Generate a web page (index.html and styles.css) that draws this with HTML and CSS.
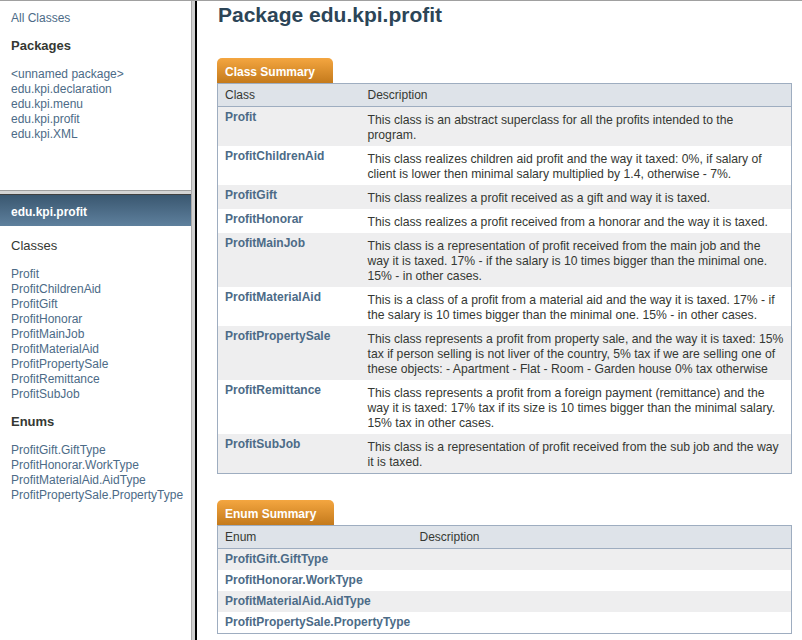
FILE: index.html
```html
<!DOCTYPE html>
<html lang="en">
<head>
  <meta charset="UTF-8" />
  <title>edu.kpi.profit</title>
  <link rel="stylesheet" href="styles.css">
</head>
<body>
  <div class="sidebar">
    <div class="packages-frame">
      <a href="#" class="all-classes">All Classes</a>
      <h2>Packages</h2>
      <ul>
        <li><a href="#">&lt;unnamed package&gt;</a></li>
        <li><a href="#">edu.kpi.declaration</a></li>
        <li><a href="#">edu.kpi.menu</a></li>
        <li><a href="#">edu.kpi.profit</a></li>
        <li><a href="#">edu.kpi.XML</a></li>
      </ul>
    </div>
    <div class="hsplit"></div>
    <div class="classes-frame">
      <h1 class="bar">edu.kpi.profit</h1>
      <h2 class="thin">Classes</h2>
      <ul>
        <li><a href="#">Profit</a></li>
        <li><a href="#">ProfitChildrenAid</a></li>
        <li><a href="#">ProfitGift</a></li>
        <li><a href="#">ProfitHonorar</a></li>
        <li><a href="#">ProfitMainJob</a></li>
        <li><a href="#">ProfitMaterialAid</a></li>
        <li><a href="#">ProfitPropertySale</a></li>
        <li><a href="#">ProfitRemittance</a></li>
        <li><a href="#">ProfitSubJob</a></li>
      </ul>
      <h2>Enums</h2>
      <ul>
        <li><a href="#">ProfitGift.GiftType</a></li>
        <li><a href="#">ProfitHonorar.WorkType</a></li>
        <li><a href="#">ProfitMaterialAid.AidType</a></li>
        <li><a href="#">ProfitPropertySale.PropertyType</a></li>
      </ul>
    </div>
  </div>
  <div class="vsplit"></div>
  <div class="content">
    <h1 class="title">Package edu.kpi.profit</h1>

    <table class="summary class-summary">
      <caption><span>Class Summary</span></caption>
      <colgroup><col class="first"><col></colgroup>
      <tr><th>Class</th><th>Description</th></tr>
      <tr class="alt">
        <td class="name"><a href="#">Profit</a></td>
        <td class="desc">This class is an abstract superclass for all the profits intended to the<br>program.</td>
      </tr>
      <tr>
        <td class="name"><a href="#">ProfitChildrenAid</a></td>
        <td class="desc">This class realizes children aid profit and the way it taxed: 0%, if salary of<br>client is lower then minimal salary multiplied by 1.4, otherwise - 7%.</td>
      </tr>
      <tr class="alt">
        <td class="name"><a href="#">ProfitGift</a></td>
        <td class="desc">This class realizes a profit received as a gift and way it is taxed.</td>
      </tr>
      <tr>
        <td class="name"><a href="#">ProfitHonorar</a></td>
        <td class="desc">This class realizes a profit received from a honorar and the way it is taxed.</td>
      </tr>
      <tr class="alt">
        <td class="name"><a href="#">ProfitMainJob</a></td>
        <td class="desc">This class is a representation of profit received from the main job and the<br>way it is taxed. 17% - if the salary is 10 times bigger than the minimal one.<br>15% - in other cases.</td>
      </tr>
      <tr>
        <td class="name"><a href="#">ProfitMaterialAid</a></td>
        <td class="desc">This is a class of a profit from a material aid and the way it is taxed. 17% - if<br>the salary is 10 times bigger than the minimal one. 15% - in other cases.</td>
      </tr>
      <tr class="alt">
        <td class="name"><a href="#">ProfitPropertySale</a></td>
        <td class="desc">This class represents a profit from property sale, and the way it is taxed: 15%<br>tax if person selling is not liver of the country, 5% tax if we are selling one of<br>these objects: - Apartment - Flat - Room - Garden house 0% tax otherwise</td>
      </tr>
      <tr>
        <td class="name"><a href="#">ProfitRemittance</a></td>
        <td class="desc">This class represents a profit from a foreign payment (remittance) and the<br>way it is taxed: 17% tax if its size is 10 times bigger than the minimal salary.<br>15% tax in other cases.</td>
      </tr>
      <tr class="alt">
        <td class="name"><a href="#">ProfitSubJob</a></td>
        <td class="desc">This class is a representation of profit received from the sub job and the way<br>it is taxed.</td>
      </tr>
    </table>

    <table class="summary enum-summary">
      <caption><span>Enum Summary</span></caption>
      <colgroup><col class="first"><col></colgroup>
      <tr><th>Enum</th><th>Description</th></tr>
      <tr class="alt"><td class="name"><a href="#">ProfitGift.GiftType</a></td><td class="desc"></td></tr>
      <tr><td class="name"><a href="#">ProfitHonorar.WorkType</a></td><td class="desc"></td></tr>
      <tr class="alt"><td class="name"><a href="#">ProfitMaterialAid.AidType</a></td><td class="desc"></td></tr>
      <tr><td class="name"><a href="#">ProfitPropertySale.PropertyType</a></td><td class="desc"></td></tr>
    </table>
  </div>
</body>
</html>
```

FILE: styles.css
```css
body {
  font-family: 'Liberation Sans', Arial, sans-serif;
  font-size: 12px;
  line-height: 15px;
  color: #353833;
  background-color: #fff;
  margin: 0;
  height: 639px;
  overflow: hidden;
  border-top: 1px solid #a0a0a0;
  display: flex;
}
a {
  color: #4c6b87;
  text-decoration: none;
}
ul {
  list-style: none;
  margin: 0;
  padding: 0;
}
.sidebar {
  width: 191px;
  display: flex;
  flex-direction: column;
}
.packages-frame {
  height: 189px;
  padding: 10px 11px 0;
  box-sizing: border-box;
}
.all-classes {
  display: block;
}
.sidebar h2 {
  font-size: 13px;
  line-height: 15px;
  font-weight: bold;
  margin: 12px 0 14px;
}
.sidebar h2.thin {
  font-weight: normal;
}
.hsplit {
  height: 3px;
  background-color: #d4d4d4;
  border-top: 1px solid #a0a0a0;
  border-bottom: 1px solid #404040;
}
.classes-frame {
  flex: 1;
}
.classes-frame .bar {
  margin: 0;
  padding: 10px 11px 6px;
  font-size: 12px;
  line-height: 15px;
  color: #fff;
  background: linear-gradient(#3a5770, #5e809d);
}
.classes-frame h2.thin {
  margin-top: 12px;
}
.classes-frame ul,
.classes-frame h2,
.classes-frame .bar {
  padding-left: 11px;
}
.vsplit {
  background-color: #cfcfcf;
  border-left: 1px solid #a9a9a9;
  border-right: 2px solid #000;
  box-sizing: border-box;
  width: 6px;
}
.content {
  flex: 1;
  padding: 0 10px 0 20px;
}
.title {
  font-size: 21px;
  line-height: 24px;
  color: #2c4557;
  margin: 2px 0 31px 1px;
}
.summary {
  width: 100%;
  border-collapse: collapse;
  table-layout: fixed;
  border-left: 1px solid #9eadc0;
  border-right: 1px solid #9eadc0;
  border-bottom: 1px solid #9eadc0;
}
.summary caption {
  text-align: left;
  padding: 0;
}
.summary caption span {
  display: inline-block;
  height: 25px;
  line-height: 28px;
  padding: 0 18px 0 8px;
  color: #fff;
  font-weight: bold;
  background: linear-gradient(#f4a640, #c47a1c);
  border-radius: 5px 5px 0 0;
  vertical-align: top;
}
.class-summary {
  margin-bottom: 26px;
}
.class-summary col.first {
  width: 143px;
}
.enum-summary col.first {
  width: 195px;
}
.summary th {
  text-align: left;
  font-weight: normal;
  background-color: #dee3e9;
  border-top: 1px solid #9eadc0;
  border-bottom: 1px solid #9eadc0;
  padding: 4px 3px 3px 7px;
}
.summary td {
  vertical-align: top;
  padding: 3px 3px 3px 7px;
}
.summary td.name {
  font-weight: bold;
}
.summary td.desc {
  padding-top: 6px;
  font-size: 12.2px;
  white-space: nowrap;
}
.summary tr {
  background-color: #fff;
}
.summary tr.alt {
  background-color: #eeeeef;
}
```
